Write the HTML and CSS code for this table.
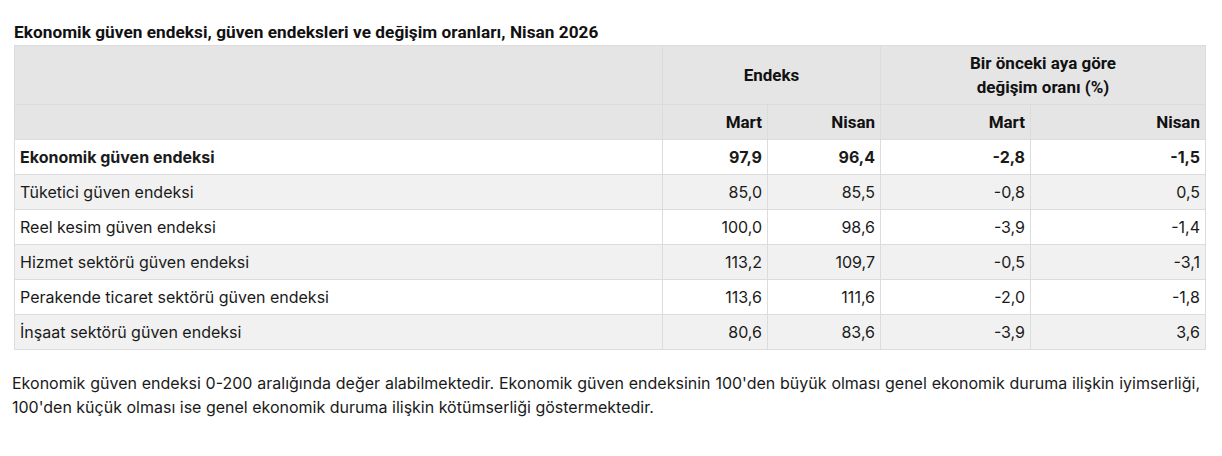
FILE: index.html
```html
<!DOCTYPE html>
<html lang="tr">
<head>
<meta charset="utf-8">
<link rel="stylesheet" href="styles.css">
</head>
<body>
<div class="page">
  <div class="figure">
    <h2 class="title">Ekonomik güven endeksi, güven endeksleri ve değişim oranları, Nisan 2026</h2>
    <table class="data">
      <colgroup>
        <col class="c-label">
        <col class="c-a">
        <col class="c-b">
        <col class="c-c">
        <col class="c-d">
      </colgroup>
      <thead>
        <tr>
          <th></th>
          <th colspan="2" class="center">Endeks</th>
          <th colspan="2" class="center">Bir önceki aya göre<br>değişim oranı (%)</th>
        </tr>
        <tr>
          <th></th>
          <th>Mart</th>
          <th>Nisan</th>
          <th>Mart</th>
          <th>Nisan</th>
        </tr>
      </thead>
      <tbody>
        <tr class="strong">
          <td>Ekonomik güven endeksi</td><td>97,9</td><td>96,4</td><td>-2,8</td><td>-1,5</td>
        </tr>
        <tr>
          <td>Tüketici güven endeksi</td><td>85,0</td><td>85,5</td><td>-0,8</td><td>0,5</td>
        </tr>
        <tr>
          <td>Reel kesim güven endeksi</td><td>100,0</td><td>98,6</td><td>-3,9</td><td>-1,4</td>
        </tr>
        <tr>
          <td>Hizmet sektörü güven endeksi</td><td>113,2</td><td>109,7</td><td>-0,5</td><td>-3,1</td>
        </tr>
        <tr>
          <td>Perakende ticaret sektörü güven endeksi</td><td>113,6</td><td>111,6</td><td>-2,0</td><td>-1,8</td>
        </tr>
        <tr>
          <td>İnşaat sektörü güven endeksi</td><td>80,6</td><td>83,6</td><td>-3,9</td><td>3,6</td>
        </tr>
      </tbody>
    </table>
  </div>
  <p class="note">Ekonomik güven endeksi 0-200 aralığında değer alabilmektedir. Ekonomik güven endeksinin 100'den büyük olması genel ekonomik duruma ilişkin iyimserliği, 100'den küçük olması ise genel ekonomik duruma ilişkin kötümserliği göstermektedir.</p>
</div>
</body>
</html>
```

FILE: styles.css
```css
html, body {
  margin: 0;
  padding: 0;
  background: #fff;
}
body {
  font-family: Inter, "Noto Sans", sans-serif;
  color: #1a1a1a;
}
.page {
  padding: 20px 16px 0 12px;
}
.figure {
  margin-left: 2px;
}
.title {
  font-family: Roboto, "Liberation Sans", sans-serif;
  font-weight: 700;
  font-size: 17.2px;
  letter-spacing: 0.05px;
  line-height: 25px;
  margin: 0;
  color: #111;
}
.data {
  width: 100%;
  border-collapse: collapse;
  table-layout: fixed;
  font-size: 16px;
  line-height: 24px;
  border: 1px solid #dcdcdc;
}
.c-label { width: 648px; }
.c-a { width: 105px; }
.c-b { width: 113px; }
.c-c { width: 150px; }
.c-d { width: auto; }
.data th, .data td {
  border: 1px solid #dcdcdc;
  padding: 5px 5px 5px 5px;
  text-align: right;
}
.data th {
  font-family: Roboto, "Liberation Sans", sans-serif;
  font-weight: 700;
  font-size: 17px;
  background: #e5e5e5;
  color: #111;
}
.data th.center {
  text-align: center;
}
.data td:first-child {
  text-align: left;
}
.data tbody tr:nth-child(even) td {
  background: #f1f1f1;
}
.data tr.strong td {
  font-weight: 700;
}
.note {
  margin: 21px 6px 0 0;
  font-size: 16px;
  line-height: 24px;
  text-align: justify;
}
```
